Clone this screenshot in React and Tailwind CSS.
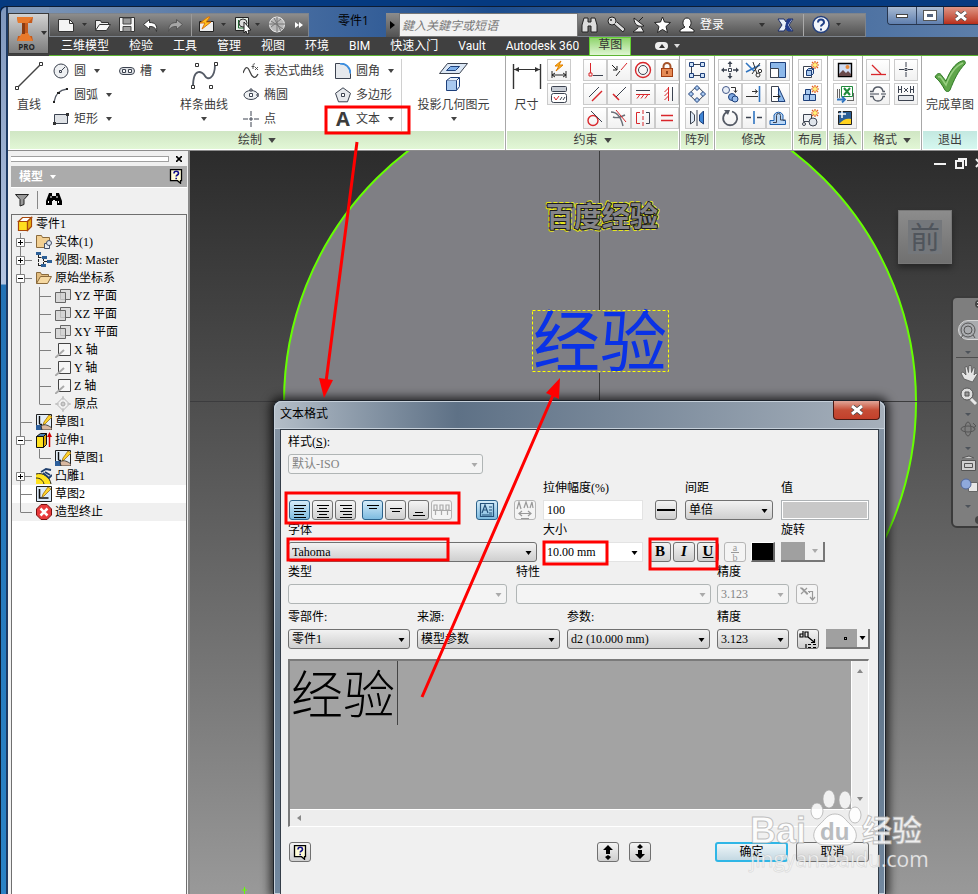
import clsx from 'clsx'

const INK = '#3c4350'
const RED = '#d9262b'
const BLUE = '#2f74c0'

/* Drawings for the 20px ribbon buttons */
const icons = {
  autoDim: (
    <>
      <path d="M12 1 6 6h4l-3 5 7-6h-4z" fill="#ffc21e" stroke="#e07b00" />
      <path d="M3 11v7M17 11v7M3 15h14M6 13l-3 2 3 2M14 13l3 2-3 2" stroke="#222" />
    </>
  ),
  showCons: (
    <>
      <rect x="2.5" y="2.5" width="15" height="5" rx="1" fill="#c9ced6" stroke={INK} />
      <rect x="2.5" y="9.5" width="15" height="9" rx="2" fill="#fff" stroke={INK} />
      <path d="m5 13 2 3 3-4" stroke={RED} />
      <path d="m11 16 2-3M14 16l2-3" stroke={INK} />
    </>
  ),
  coincident: (
    <>
      <path d="M5.5 3v10M4 13h3v3H4z" stroke={RED} />
      <path d="M8 15.5h10" stroke={INK} />
    </>
  ),
  collinear: (
    <>
      <path d="m3 5 5 5M8 6v4H4M7 16l4-5" stroke="#222" />
      <path d="m12 10 6-7" stroke={RED} />
    </>
  ),
  concentric: (
    <>
      <circle cx="10" cy="10" r="7.5" stroke={RED} strokeWidth="1.4" />
      <circle cx="10" cy="10" r="4.5" stroke={INK} />
    </>
  ),
  fix: (
    <>
      <path d="M6.5 9V6.5a3.5 3.5 0 0 1 7 0V9" stroke="#a5542b" strokeWidth="2" />
      <rect x="4.5" y="8.5" width="11" height="8" fill="#e58a54" stroke="#a23d12" />
      <path d="M10 11v3" stroke="#7c2c0a" strokeWidth="1.6" />
    </>
  ),
  parallel: (
    <>
      <path d="M4 13 14 3" stroke={INK} />
      <path d="M7 17 17 7" stroke={RED} strokeWidth="1.4" />
    </>
  ),
  perpendicular: (
    <>
      <path d="m4 10 6 6" stroke={RED} strokeWidth="1.6" />
      <path d="M7 13 17 3" stroke={INK} />
    </>
  ),
  horizontal: (
    <>
      <path d="M3 6.5h14" stroke={INK} />
      <path d="M3 10.5h14M7 10.5l-3 4M11 10.5l-3 4M15 10.5l-3 4" stroke={RED} />
    </>
  ),
  vertical: (
    <>
      <path d="M15.5 3v14" stroke={INK} />
      <path d="M11.5 3v14M11.5 4l-4 4M11.5 8l-4 4M11.5 12l-4 4" stroke={RED} />
    </>
  ),
  tangent: (
    <>
      <circle cx="8" cy="12.5" r="5" stroke={RED} strokeWidth="1.4" />
      <path d="m6 3 11 11" stroke={INK} />
    </>
  ),
  smooth: (
    <>
      <path d="M2 4c6 0 10 5 12 14M4 9c4 2 8 0 12-2" stroke="#6a6f78" strokeWidth="1.4" />
      <path d="m7 2 10 12" stroke={RED} />
    </>
  ),
  symmetric: (
    <>
      <path d="M7 4.500H3.500v11H7M10 2v4M10 8v4M10 14v4" stroke={RED} />
      <path d="M13 4.500h3.500v11H13" stroke={INK} />
    </>
  ),
  equal: <path d="M4 7.500h12M4 12.500h12" stroke={RED} strokeWidth="1.4" />,
  rectPattern: (
    <>
      <path d="M6 4.500h8M4.500 7v7M6 15.500h8" stroke={INK} />
      <path d="M2.500 2.500h4v4h-4zM13.500 2.500h4v4h-4zM2.500 13.500h4v4h-4zM13.500 13.500h4v4h-4z" fill="#cfe2f7" stroke="#1d3f7a" />
    </>
  ),
  circPattern: (
    <>
      <circle cx="10" cy="10" r="6" stroke={INK} />
      <path d="m10 1.500 2.500 2.500-2.500 2.500-2.500-2.500zM10 13.500l2.500 2.500-2.500 2.500-2.500-2.500zM4 7.500l2.500 2.500-2.500 2.500-2.500-2.500zM16 7.500l2.500 2.500-2.500 2.500-2.500-2.500z" fill="#a9c9ef" stroke="#1d3f7a" />
    </>
  ),
  mirror: (
    <>
      <path d="M3.500 3v13l4-3V7z" fill="#dfe9f5" stroke={INK} />
      <path d="M16.500 3v13l-4-3V7z" fill="#3f86d6" stroke="#1d3f7a" />
      <path d="M10 2v16" stroke={INK} />
    </>
  ),
  move: (
    <>
      <path d="M10 3v4M10 13v4M3 10h4M13 10h4" stroke={INK} strokeWidth="1.4" />
      <path d="m10 1 2.500 3h-5zM10 19l2.500-3h-5zM1 10l3-2.500v5zM19 10l-3-2.500v5z" fill={INK} />
      <path d="M8.500 8.500h3v3h-3z" fill="#fff" stroke={INK} />
    </>
  ),
  trim: (
    <>
      <path d="m2 3 8 8M2 12 16 5" stroke={BLUE} strokeWidth="1.6" />
      <path d="m9 2 4 12M16 3 8 14" stroke="#333" />
      <circle cx="14" cy="15" r="2" stroke="#333" />
      <circle cx="16" cy="11" r="1.7" stroke="#333" />
    </>
  ),
  scale: (
    <>
      <path d="M2.500 2.500h15v15h-15z" fill="#8cb8ea" stroke="#1d3f7a" />
      <path d="M2.500 8.500h8v9h-8z" fill="#fff" stroke={INK} />
    </>
  ),
  copy: (
    <>
      <circle cx="6" cy="6" r="3.5" fill="#e8eef6" stroke="#44598a" />
      <circle cx="12" cy="13" r="3.5" fill="#7ea9e2" stroke="#1d3f7a" />
      <circle cx="15" cy="15" r="3" fill="#9cc0ef" stroke="#1d3f7a" />
      <path d="M11 3.500h4.500V8M14 6.500l1.500 2 1.500-2" stroke="#333" />
    </>
  ),
  extend: (
    <>
      <path d="M15.500 2v16" stroke={BLUE} strokeWidth="1.6" />
      <path d="M2 12.500h12M8 7.500h5M11 5.500l2.500 2-2.500 2" stroke="#333" />
    </>
  ),
  stretch: (
    <>
      <path d="M3.500 2.500h7v15h-7z" fill="#fff" stroke={INK} />
      <path d="M10.500 3.500 17 17.500h-6.500z" fill="#8cb8ea" stroke="#1d3f7a" />
      <path d="M5 12.500h7M10 10.500l2 2-2 2" stroke="#222" />
    </>
  ),
  rotate: (
    <>
      <path d="M7 4a7 7 0 1 0 5-.5" stroke="#555b66" strokeWidth="1.8" />
      <path d="m4 2 6 0-2 5z" fill="#555b66" />
    </>
  ),
  split: (
    <>
      <path d="M2 9.500h5M13 9.500h5" stroke={INK} strokeWidth="1.4" />
      <path d="M10 3v13" stroke={BLUE} strokeWidth="1.6" />
    </>
  ),
  offset: (
    <>
      <path d="M2 16.500h15.500v-4H15V7a5 5 0 0 0-9 0v5.500H2z" fill="#b9d6f5" stroke="#1d5fae" />
      <path d="M5 14.500h3.500V7.500a2 2 0 0 1 4 0v4.500h5" stroke={INK} />
    </>
  ),
  part: (
    <>
      <path d="M3.500 6.500h8v11h-8z" fill="#fff" stroke={INK} />
      <path d="M6.500 10.500h5v5h-5zM6.500 10.500l2-2h5l-2 2M13.500 8.500v5l-2 2" fill="#a9c9ef" stroke="#1d3f7a" />
      <path d="M15 1v8M11 5h8M12 2l6 6M18 2l-6 6" stroke="#e2601a" strokeWidth="1.2" />
      <circle cx="15" cy="5" r="2" fill="#fff27a" />
    </>
  ),
  component: (
    <>
      <path d="M3.500 10.500h6v6h-6zM9.500 10.500h6v6h-6zM5.500 5.500h5v5h-5z" fill="#a9c9ef" stroke="#1d3f7a" />
      <path d="M15 1v8M11 5h8M12 2l6 6M18 2l-6 6" stroke="#e2601a" strokeWidth="1.2" />
      <circle cx="15" cy="5" r="2" fill="#fff27a" />
    </>
  ),
  block: (
    <>
      <path d="M3.500 6.500h8v7h-8z" fill="#eceff3" stroke={INK} />
      <circle cx="13" cy="14" r="4" fill="#dfe4ea" stroke={INK} />
      <circle cx="4" cy="16" r="1.5" stroke={INK} />
      <path d="M15 1v8M11 5h8M12 2l6 6M18 2l-6 6" stroke="#e2601a" strokeWidth="1.2" />
      <circle cx="15" cy="5" r="2" fill="#fff27a" />
    </>
  ),
  image: (
    <>
      <path d="M3.500 3.500h13v13h-13z" fill="#cfdcf3" stroke="#000" strokeWidth="1.4" />
      <path d="m4 14 4-4 3 3 2-2 3 3v2H4z" fill="#6a4a4a" />
      <circle cx="12.5" cy="7" r="2" fill="#e98a3a" />
    </>
  ),
  excel: (
    <>
      <path d="M6.500 2.500h11v10h-11z" fill="#fff" stroke="#1f8a3b" />
      <path d="m9 4 6 7M15 4l-6 7" stroke="#1f8a3b" strokeWidth="2" />
      <path d="M2.500 5v9M4.500 5v9M12 16.500h6M18.500 9v8" stroke="#666" />
      <path d="M2 15.500h7M7 12.500l3 3-3 3" stroke={BLUE} strokeWidth="1.8" />
    </>
  ),
  acad: (
    <>
      <path d="M3.500 3.500h13v13h-13z" fill="#2c5f96" stroke="#222" />
      <path d="M4 16c4-5 8-6 12-5v5z" fill="#ffd21f" />
      <path d="M3 6h8M7 2v8" stroke="#fff" strokeWidth="1.5" />
    </>
  ),
  construction: (
    <>
      <path d="m4 5 9 9" stroke={RED} strokeWidth="1.3" />
      <path d="M3 14.500h15" stroke={RED} strokeWidth="1.3" />
    </>
  ),
  centerPoint: (
    <>
      <path d="M10 2v5M10 12v5M3 9.500h5M12 9.500h5" stroke={INK} />
      <path d="M9 8.500h2v2H9z" stroke={INK} />
    </>
  ),
  centerline: (
    <>
      <path d="M2 7.500h3c1-6 9-6 10 0h2M2 12.500h3c1 6 9 6 10 0h2" stroke="#555b66" strokeWidth="1.4" />
      <path d="M2 10h9M13 10h5" stroke={INK} />
    </>
  ),
  driven: (
    <>
      <path d="M2.500 2v7M5.500 2v7M14.500 2v7M17.500 2v7M2.500 5.500h3M14.500 5.500h3M8 4l4 4M12 4 8 8" stroke={INK} />
      <path d="M2.500 11.500h15v5h-15z" fill="#e4e7eb" stroke={INK} />
    </>
  ),
}

const bigIcons = {
  line: (
    <>
      <path d="M3 26 27 2" stroke="#444" strokeWidth="1.4" />
      <path d="M1.500 24.500h3v3h-3zM25.500.5h3v3h-3z" fill="#fff" stroke="#333" />
    </>
  ),
  spline: (
    <>
      <path d="M4 25C4 4 14 10 16 14s10 4 10-12" stroke="#555b66" strokeWidth="1.8" />
      <path d="M2.500 23.500h3v3h-3zM6.500 1.500h3v3h-3zM20.500 23.500h3v3h-3zM25.500.5h3v3h-3z" fill="#fff" stroke="#333" />
    </>
  ),
  project: (
    <>
      <path d="M8.500 1.500h20l-8 10h-20z" fill="#dbe7f5" stroke={INK} />
      <path d="M11.500 4.500h9l-4 4h-9z" fill="#7fb0ea" stroke="#1d3f7a" />
      <path d="M7.500 18.500h10v10h-10z" fill="#a9c9ef" stroke="#1d3f7a" />
      <path d="m7.500 18.500 4-3h9l-3 3M20.500 15.500v9l-3 4" fill="#e8f1fb" stroke="#1d3f7a" />
    </>
  ),
  dimension: (
    <>
      <path d="M1.500 2v25M28.500 2v25" stroke="#333" strokeWidth="1.4" />
      <path d="M2 7.500h26" stroke="#333" />
      <path d="M2 7.500 7 5v5zM28 7.500 23 5v5z" fill="#333" />
    </>
  ),
}

const smallIcons = {
  circle: (
    <>
      <circle cx="8" cy="8" r="7" fill="#eef0f2" stroke={INK} />
      <path d="M6.500 7.500h2v2h-2zM9 7l3-3" stroke={INK} />
    </>
  ),
  arc: (
    <>
      <path d="M1 15C2 8 6 3 14 2" stroke="#555b66" strokeWidth="1.4" />
      <path d="M0 14h2v2H0zM4 5h3v2H4zM13 1h2v2h-2z" fill="#222" />
    </>
  ),
  rect: (
    <>
      <path d="M1.500 3.500h13v9h-13z" fill="#dfe2e6" stroke={INK} />
      <path d="M0 11h3v3H0zM13 2h3v3h-3z" fill="#333" />
    </>
  ),
  slot: (
    <>
      <rect x=".5" y="4.5" width="15" height="7" rx="3.5" fill="#dfe2e6" stroke={INK} />
      <path d="M3.500 6.500h3v3h-3zM9.500 6.500h3v3h-3z" fill="#fff" stroke={INK} />
    </>
  ),
  equation: (
    <>
      <path d="M0 10c3-8 5-6 7-1s5 8 8 2" stroke="#444" strokeWidth="1.3" />
      <path d="M12 1c-2-1-2 1-2 5M8.500 3.500h3M12 4l3 3M15 4l-3 3" stroke="#444" strokeWidth=".9" />
    </>
  ),
  ellipse: (
    <>
      <ellipse cx="8" cy="8" rx="7" ry="4.5" fill="#eef0f2" stroke={INK} />
      <path d="M6.500 6.500h3v3h-3zM14 7h2v2h-2zM7 2h2v2H7z" fill="#fff" stroke={INK} />
    </>
  ),
  point: <path d="M8 0v5M8 11v5M0 8h5M11 8h5M7 7h2v2H7z" stroke={INK} />,
  fillet: (
    <>
      <path d="M.5 15.500V.5H5c6 0 10 4 10.500 10v5z" fill="#e6e9ed" stroke={INK} />
      <path d="M5 .5c6 0 10 4 10.500 10" stroke="#3d8fe0" strokeWidth="2" />
    </>
  ),
  polygon: (
    <>
      <path d="m8 .8 7.500 5.500-3 8.500h-9L.5 6.300z" fill="#e6e9ed" stroke={INK} />
      <path d="M6.500 6.500h3v3h-3z" fill="#fff" stroke={INK} />
    </>
  ),
}

function Caret({ className }) {
  return (
    <svg viewBox="0 0 6 4" className={clsx('h-1 w-1.5 shrink-0', className)} aria-hidden="true">
      <path d="M0 0h6L3 4z" fill="currentColor" />
    </svg>
  )
}

function IconButton({ name }) {
  return (
    <button type="button" aria-label={name} className="flex h-[22px] w-6 items-center justify-center border border-[#cbcbcb] bg-gradient-to-b from-white to-[#f1f1f1]">
      <svg viewBox="0 0 20 20" fill="none" className="size-5">{icons[name]}</svg>
    </button>
  )
}

function SmallTool({ icon, label, menu }) {
  return (
    <button type="button" className="flex h-6 items-center whitespace-nowrap text-left">
      {icon === 'text' ? (
        <b className="mr-[5px] w-4 text-center text-[20px] leading-6 text-[#3c3c3c]">A</b>
      ) : (
        <svg viewBox="0 0 16 16" fill="none" className="mr-[5px] size-4 shrink-0">{smallIcons[icon]}</svg>
      )}
      {label}
      {menu && <Caret className="ml-2 text-[#444]" />}
    </button>
  )
}

function BigTool({ icon, label, menu, className }) {
  return (
    <button type="button" className={clsx('flex h-[72px] flex-col items-center whitespace-nowrap pt-[3px]', className)}>
      <svg viewBox="0 0 30 30" fill="none" className="size-[30px]">{bigIcons[icon]}</svg>
      <span className="mt-[5px] leading-4">{label}</span>
      {menu && <Caret className="mt-1 text-[#444]" />}
    </button>
  )
}

function Panel({ title, menu, className, foot = 'from-[#d0e6c4] to-[#e2f7d6]', children }) {
  return (
    <section className={clsx('flex shrink-0 flex-col border-r border-[#a8a8a8]', className)}>
      <div className="flex h-[75px] justify-center pt-[3px]">{children}</div>
      <h2 className={clsx('mx-px flex h-[18px] items-center justify-center gap-1.5 whitespace-nowrap bg-gradient-to-b', foot)}>
        {title}
        {menu && <Caret className="h-[5px] w-2 text-[#444]" />}
      </h2>
    </section>
  )
}

function IconGrid({ names, className }) {
  return (
    <div className={clsx('grid content-start gap-y-0.5', className)}>
      {names.map((n) => <IconButton key={n} name={n} />)}
    </div>
  )
}

function QuickAccess() {
  return (
    <div className="flex h-6 w-[260px] shrink-0 items-center border border-[#7e848c] bg-gradient-to-b from-[#8d8d8d] to-[#525252] text-[#333]">
      <svg viewBox="0 0 258 22" fill="none" className="h-[22px] w-full">
        <path d="M8.500 5.500h11l4 4v8h-15z" fill="#f4f4f4" stroke="#333" />
        <path d="M19.500 5.500v4h4" stroke="#333" />
        <path d="M32 9h5l-2.500 3zM171 9h5l-2.500 3zM205 9h5l-2.500 3z" fill="#333" />
        <path d="M45.500 16.500v-10h5l1 2h7v3" fill="#eee" stroke="#333" />
        <path d="m45.500 16.500 4-6h11l-4 6z" fill="#f7f7f7" stroke="#333" />
        <path d="M69.500 3.500h15v14h-15z" fill="#f4f4f4" stroke="#333" />
        <path d="M73 4h8v6h-8zM73 12.500h8v5h-8z" fill="#9a9a9a" stroke="#444" />
        <path d="m93.500 10.500 6-5v3c6 0 8 3 7 9-1-4-3-5-7-5v3z" fill="#fff" stroke="#333" />
        <path d="m132.500 10.500-6-5v3c-6 0-8 3-8 9 1-4 4-5 8-5v3z" fill="#a6a6a6" stroke="#555" />
        <path d="M141.500 0v22" stroke="#9a9a9a" />
        <path d="M149.500 7.500h14v10h-14z" fill="#eee" stroke="#222" />
        <path d="m158 3-8 6h5l-3 6 9-7h-5l4-5z" fill="#ffc31e" stroke="#d8700c" />
        <path d="M185.500 3.500h13v13h-13z" fill="#e4eee6" stroke="#222" />
        <path d="M188.500 6v8h7" stroke="#226b32" />
        <circle cx="193" cy="9" r="4" fill="#ddd" stroke="#333" />
        <path d="m194 8 7 8-3 .5 1 3-2 .5-1-3-2 2z" fill="#fff" stroke="#222" />
        <circle cx="227" cy="10.5" r="7.5" fill="#b9b9b9" stroke="#eee" />
        <path d="m221 7 12 8M221 13l10-8M224 4l7 13M227 3v15M219 10h16" stroke="#777" />
        <path d="m245 8 4 3-4 3zM249 8l4 3-4 3z" fill="#fff" />
      </svg>
    </div>
  )
}

function InfoBar() {
  return (
    <div className="flex h-6 w-[288px] shrink-0 items-center border border-l-0 border-[#7e848c] bg-gradient-to-b from-[#8d8d8d] to-[#525252] text-xs text-white">
      <svg viewBox="0 0 118 22" fill="none" className="h-[22px] w-[118px]">
        <path d="M6 4h4v4h3V4h4l2 7v7h-6v-6h-3v6H4v-7z" fill="#ddd" stroke="#222" />
        <circle cx="34" cy="7" r="4" fill="#ddd" stroke="#222" />
        <circle cx="33" cy="6" r="1" fill="#333" />
        <path d="m36 10 9 8 2-3-8-7" fill="#ddd" stroke="#222" />
        <path d="M56 4c0 7 4 9 10 8zM60 14l-5 4h11l-3-5M61 7l4-4" fill="#eee" stroke="#222" />
        <path d="m84.500 3 2 5 6 .5-4.500 4 1.500 6-5-3-5 3 1.500-6-4.500-4 6-.5z" fill="#fff" stroke="#222" />
        <path d="M109 4c5 0 5 8 2 9l5 3v2h-14v-2l5-3c-3-1-3-9 2-9z" fill="#fff" stroke="#222" />
      </svg>
      <button type="button" className="mx-1 whitespace-nowrap">登录</button>
      <span className="flex-1" />
      <Caret className="mr-2.5 text-[#333]" />
      <svg viewBox="0 0 90 22" fill="none" className="h-[22px] w-[90px]">
        <path d="M3 5h6l2 3 2-3h5l-4 6 4 6h-5l-2-3-2 3H3l4-6z" fill="#eaf0fa" stroke="#1d2f6a" />
        <path d="M12 5h5l-4 6 4 6h-5l-2-4 1-4z" fill="#223c8c" />
        <path d="M28.500 0v22" stroke="#aaa" />
        <circle cx="46" cy="10.5" r="8" fill="#f2f5fa" stroke="#24407e" strokeWidth="1.5" />
        <path d="M43 8.500c0-4 6-4 6 0 0 2-3 2-3 4M46 14.500v2" stroke="#1f3f86" strokeWidth="2" />
        <path d="M61 9h5l-2.500 3z" fill="#333" />
      </svg>
    </div>
  )
}

const tabs = ['三维模型', '检验', '工具', '管理', '视图', '环境', 'BIM', '快速入门', 'Vault', 'Autodesk 360']

function Header() {
  return (
    <header className="flex bg-gradient-to-r from-[#8098b8] via-[#1c4d8e] to-[#5d7ea9]">
      <div className="flex w-[41px] shrink-0 flex-col bg-gradient-to-b from-[#8098b8] from-75% to-[#404040] to-75% pt-[6px]">
        <button type="button" className="flex h-[41px] flex-col items-center border border-[#3a3a3a] bg-gradient-to-b from-[#d2d2d2] to-[#7d7d7d] text-[#222]">
          <svg viewBox="0 0 40 28" className="h-7 w-10">
            <path d="M8 3h16l-1 6h-4v13h4l1 5H8l1-5h4V9H9z" fill="#c65a1b" />
            <path d="M8 3h16l-5 6H9zM8 27l5-8h6l5 8z" fill="#e8792a" />
            <path d="M13 9h3v11h-3z" fill="#8a3b10" />
            <path d="M32 17h6l-3 4z" fill="#333" />
          </svg>
          <b className="-ml-1 text-[8px] leading-[10px]">PRO</b>
        </button>
      </div>
      <div className="min-w-0 flex-1">
        <div className="flex h-[30px] items-start">
          <div className="flex min-w-0 flex-1 pt-[6px]">
            <QuickAccess />
            <h1 className="w-[77px] shrink-0 pl-3 text-center text-xs leading-4 text-black">零件1</h1>
            <button type="button" aria-label="展开" className="flex h-6 w-[13px] shrink-0 items-center justify-center bg-gradient-to-b from-[#8d8d8d] to-[#525252]">
              <svg viewBox="0 0 5 8" className="h-2 w-[5px]"><path d="m0 0 5 4-5 4z" /></svg>
            </button>
            <input aria-label="搜索" placeholder="鍵入关鍵字或短语" className="h-6 w-[179px] shrink-0 border border-[#777] bg-[#f2f2f2] px-0.5 text-xs italic placeholder:text-[#777]" />
            <InfoBar />
          </div>
          <div className="flex h-[18px] w-[91px] shrink-0 overflow-hidden rounded-bl border border-t-0 border-r-0 border-[#27364f]">
            <button type="button" aria-label="最小化" className="flex w-[29px] items-center justify-center border-r border-[#33445f] bg-gradient-to-b from-[#a9bbd3] to-[#607fae]">
              <span className="h-1 w-3 border border-[#444] bg-white" />
            </button>
            <button type="button" aria-label="最大化" className="flex w-[27px] items-center justify-center border-r border-[#33445f] bg-gradient-to-b from-[#a9bbd3] to-[#607fae]">
              <span className="h-[9px] w-3 border-[3px] border-white bg-[#55657f] outline outline-[#555]" />
            </button>
            <button type="button" aria-label="关闭" className="flex flex-1 items-center justify-center bg-gradient-to-b from-[#dd9585] to-[#b92c19]">
              <svg viewBox="0 0 12 10" className="h-[10px] w-3"><path d="m1 1 10 8M11 1 1 9" stroke="#444" strokeWidth="4.5" /><path d="m1 1 10 8M11 1 1 9" stroke="#fff" strokeWidth="3" /></svg>
            </button>
          </div>
        </div>
        <nav className="flex h-[19px] items-center border-b border-[#5cb531] bg-[#404040] pl-[2px] text-xs text-white [font-family:Roboto,'Noto_Sans_CJK_SC',sans-serif]">
          {tabs.map((t) => (
            <a key={t} href="#" className="whitespace-nowrap px-[10px] leading-4">{t}</a>
          ))}
          <a href="#" className="flex h-[18px] items-start whitespace-nowrap border border-b-0 border-[#63d132] bg-gradient-to-b from-[#8fd46c] to-[#dff5d2] px-2 leading-[15px] text-[#333]">草图</a>
          <span className="ml-6 flex h-2 w-[13px] items-center justify-center rounded-sm bg-[#eee] text-[#333]"><Caret className="rotate-180" /></span>
          <Caret className="ml-1.5 text-[#ddd]" />
        </nav>
      </div>
    </header>
  )
}

function Ribbon() {
  return (
    <div className="flex h-[95px] overflow-hidden border-b border-[#8c8c8c] bg-white pl-px text-xs text-[#3c3c3c]">
      <Panel title="绘制" menu className="w-[497px]">
        <BigTool icon="line" label="直线" className="w-10" />
        <div className="flex w-[66px] flex-col pl-1">
          <SmallTool icon="circle" label="圆" menu />
          <SmallTool icon="arc" label="圆弧" menu />
          <SmallTool icon="rect" label="矩形" menu />
        </div>
        <div className="w-14 pl-1"><SmallTool icon="slot" label="槽" menu /></div>
        <BigTool icon="spline" label="样条曲线" menu className="w-[66px]" />
        <div className="flex w-[94px] flex-col pl-1.5">
          <SmallTool icon="equation" label="表达式曲线" />
          <SmallTool icon="ellipse" label="椭圆" />
          <SmallTool icon="point" label="点" />
        </div>
        <div className="flex w-[71px] flex-col border-r border-[#d0d0d0] pl-1">
          <SmallTool icon="fillet" label="圆角" menu />
          <SmallTool icon="polygon" label="多边形" />
          <SmallTool icon="text" label="文本" menu />
        </div>
        <BigTool icon="project" label="投影几何图元" menu className="flex-1" />
      </Panel>
      <Panel title="约束" menu className="w-[174px]">
        <BigTool icon="dimension" label="尺寸" className="w-10" />
        <IconGrid names={['autoDim', 'showCons']} />
        <IconGrid
          className="ml-3 grid-cols-4"
          names={['coincident', 'collinear', 'concentric', 'fix', 'parallel', 'perpendicular', 'horizontal', 'vertical', 'tangent', 'smooth', 'symmetric', 'equal']}
        />
      </Panel>
      <Panel title="阵列" className="w-[35px]"><IconGrid names={['rectPattern', 'circPattern', 'mirror']} /></Panel>
      <Panel title="修改" className="w-[78px]">
        <IconGrid className="grid-cols-3" names={['move', 'trim', 'scale', 'copy', 'extend', 'stretch', 'rotate', 'split', 'offset']} />
      </Panel>
      <Panel title="布局" className="w-[35px]"><IconGrid names={['part', 'component', 'block']} /></Panel>
      <Panel title="插入" className="w-[35px]"><IconGrid names={['image', 'excel', 'acad']} /></Panel>
      <Panel title="格式" menu className="w-[59px]">
        <IconGrid className="grid-cols-2 gap-x-1" names={['construction', 'centerPoint', 'centerline', 'driven']} />
      </Panel>
      <Panel title="退出" className="min-w-[57px] flex-1" foot="from-[#c3e8e0] to-[#d6f8f0]">
        <button type="button" className="flex flex-col items-center whitespace-nowrap">
          <svg viewBox="0 0 34 34" className="h-[34px] w-[34px]">
            <path d="M2 18c2-4 5-5 7-1l4 5C17 12 22 4 29 2c3-1 4 1 3 3-7 7-11 16-15 26-1 2-4 2-5 0-3-5-5-9-10-13z" fill="#5fa54a" stroke="#2e7a24" />
            <path d="M5 18c2-1 3 0 4 2l4 6C17 15 22 7 30 4" fill="none" stroke="#98cf82" strokeWidth="1.5" />
          </svg>
          <span className="mt-1 leading-4">完成草图</span>
        </button>
      </Panel>
    </div>
  )
}

/* Model browser */
const treeIcons = {
  part: (
    <>
      <path d="M1.500 5.500h9v9h-9z" fill="#ffdf1f" stroke="#a8480c" strokeWidth="1.2" />
      <path d="m1.500 5.500 4-4h9l-4 4z" fill="#fff" stroke="#a8480c" strokeWidth="1.2" />
      <path d="m10.500 5.500 4-4v9l-4 4z" fill="#e8b010" stroke="#a8480c" strokeWidth="1.2" />
    </>
  ),
  solids: (
    <>
      <path d="M.5 13.500v-12h5l1 2h7v10z" fill="#f2cf92" stroke="#8a6a3c" />
      <path d="M8.500 9.500h5v5h-5z" fill="#e8ecf2" stroke="#44506a" />
      <circle cx="13" cy="9" r="2.5" fill="#dfe6f0" stroke="#44506a" />
    </>
  ),
  view: (
    <>
      <path d="M2.500 3v11M2.500 5.500h4M7.500 6v8M8 9.500h3M2.500 13.500h3" stroke="#222" strokeDasharray="3 1" />
      <path d="M0 0h5v3H0zM6 4h5v3H6zM11 8h5v3h-5zM5 12h5v3H5z" fill="#2c5f96" />
    </>
  ),
  folder: (
    <>
      <path d="M.5 13.500v-11h4l1 2h7v2" fill="#e2bd80" stroke="#8a6a3c" />
      <path d="m.5 13.500 4-7h11l-4 7z" fill="#f6d9a2" stroke="#8a6a3c" />
    </>
  ),
  plane: (
    <>
      <path d="M5.500 1.500h10v10h-10z" fill="#ddd" stroke="#666" />
      <path d="M.5 4.500h10v10H.5z" fill="#d2d2d2" fillOpacity=".8" stroke="#666" />
    </>
  ),
  axis: (
    <>
      <path d="M3.500 1.500h12v12h-12z" fill="#f6f6f6" stroke="#444" />
      <path d="m0 16 9-8" stroke="#aaa" strokeWidth="2" />
    </>
  ),
  origin: (
    <>
      <path d="M8 1.500 14.500 8 8 14.500 1.500 8zM8 0v4M8 12v4M0 8h4M12 8h4" stroke="#b5b5b5" />
      <circle cx="8" cy="8" r="2" fill="#ccc" stroke="#aaa" />
    </>
  ),
  sketchUsed: (
    <>
      <path d="M.5.500h15v15H.5z" fill="#e4eef8" stroke="#222" />
      <path d="M3.500 2v8M3.500 10.500H6" stroke="#111" strokeWidth="1.4" />
      <path d="m13 1 3 2-7 7-2 1 1-3z" fill="#ffd42a" stroke="#a07010" strokeWidth=".8" />
      <path d="M0 11h6v5H0z" fill="#2d5f9c" />
      <path d="M5 12c4-3 8 0 11 2v2H6z" fill="#d9b8a0" stroke="#222" strokeWidth=".8" />
    </>
  ),
  extrude: (
    <>
      <path d="M.5 4.500h7v11h-7z" fill="#ffe21f" stroke="#111" />
      <path d="m7.500 4.500 3-3v11l-3 3z" fill="#d8a80c" stroke="#111" />
      <path d="m.5 4.500 4-3h6l-3 3z" fill="#4a7fb5" stroke="#111" />
      <path d="M13.500 15V4" stroke="#d40000" strokeWidth="1.5" />
      <path d="m11 5 2.500-5L16 5z" fill="#d40000" />
    </>
  ),
  emboss: (
    <>
      <path d="M0 6c7-2 14 3 15 10H0z" fill="#ffe21f" />
      <path d="M0 6c7-2 14 3 15 10M0 10c4 0 7 2 8 6" stroke="#222" />
      <path d="m5 4 5-3 5 1M7 5l6 5 3-3M9 4l5 3" stroke="#1f3f6d" strokeWidth="1.8" />
    </>
  ),
  sketch: (
    <>
      <path d="M.5.500h15v15H.5z" fill="#dcebfa" stroke="#222" />
      <path d="M3.500 3v9h9" stroke="#111" strokeWidth="1.6" />
      <path d="m12 1 3 2-7 7-2 1 1-3z" fill="#ffd42a" stroke="#a07010" strokeWidth=".8" />
    </>
  ),
  end: (
    <>
      <path d="M5 .5h6l4.500 4.500v6L11 15.500H5L.5 11V5z" fill="#e8393b" stroke="#7a1010" />
      <path d="m4.500 4.500 7 7M11.500 4.500l-7 7" stroke="#fff" strokeWidth="2.5" />
    </>
  ),
}

const tree = [
  { guides: [], icon: 'part', label: '零件1' },
  { guides: ['plus'], icon: 'solids', label: '实体(1)' },
  { guides: ['plus'], icon: 'view', label: '视图: Master' },
  { guides: ['minus'], icon: 'folder', label: '原始坐标系' },
  { guides: ['line', 'tee'], icon: 'plane', label: 'YZ 平面' },
  { guides: ['line', 'tee'], icon: 'plane', label: 'XZ 平面' },
  { guides: ['line', 'tee'], icon: 'plane', label: 'XY 平面' },
  { guides: ['line', 'tee'], icon: 'axis', label: 'X 轴' },
  { guides: ['line', 'tee'], icon: 'axis', label: 'Y 轴' },
  { guides: ['line', 'tee'], icon: 'axis', label: 'Z 轴' },
  { guides: ['line', 'end'], icon: 'origin', label: '原点' },
  { guides: ['tee'], icon: 'sketchUsed', label: '草图1' },
  { guides: ['minus'], icon: 'extrude', label: '拉伸1' },
  { guides: ['line', 'end'], icon: 'sketchUsed', label: '草图1' },
  { guides: ['plus'], icon: 'emboss', label: '凸雕1' },
  { guides: ['tee'], icon: 'sketch', label: '草图2', active: true },
  { guides: ['end'], icon: 'end', label: '造型终止' },
]

function Guide({ type }) {
  const box = type === 'plus' || type === 'minus'
  return (
    <svg viewBox="0 0 19 18" fill="none" className="h-[18px] w-[19px] shrink-0 overflow-visible" stroke="#808080">
      <path d={type === 'end' ? 'M3.500 0v9' : 'M3.500 0v18'} />
      {type !== 'line' && <path d="M3.500 9.500H15" />}
      {box && <path d="M-.5 5.500h8v8h-8z" fill="#fff" />}
      {box && <path d="M1 9.500h5" stroke="#000" />}
      {type === 'plus' && <path d="M3.500 7v5" stroke="#000" />}
    </svg>
  )
}

function ModelBrowser() {
  return (
    <aside className="flex w-[182px] shrink-0 flex-col border-r-2 border-[#8a8a8a] bg-[#f0f0f0] pl-[3px] pr-[1px] text-black [font-family:'Liberation_Serif','Noto_Sans_CJK_SC',serif]">
      <div className="flex h-[15px] items-center gap-1 pr-0.5">
        <span className="h-1.5 flex-1 border-y border-r border-[#a0a0a0] bg-white" />
        <button type="button" aria-label="关闭面板" className="flex w-3 justify-center">
          <svg viewBox="0 0 6 6" className="size-1.5"><path d="m0 0 6 6M6 0 0 6" stroke="#000" strokeWidth="1.6" /></svg>
        </button>
      </div>
      <div className="flex h-[21px] items-center bg-[#ababab] pl-2 pr-1 text-xs text-white">
        <b>模型</b>
        <Caret className="ml-1.5 h-1 w-2" />
        <button type="button" aria-label="帮助" className="ml-auto"><HelpIcon /></button>
      </div>
      <div className="flex h-[27px] items-start gap-2 border-t border-white pl-1 pt-[3px]">
        <button type="button" aria-label="过滤器">
          <svg viewBox="0 0 14 16" className="h-4 w-3.5"><path d="M.5 3.500h13L9 8.500v5l-4 1.500V8.500z" fill="#999" stroke="#222" /></svg>
        </button>
        <span className="h-[18px] w-px bg-[#888]" />
        <button type="button" aria-label="查找">
          <svg viewBox="0 0 16 16" className="size-4"><path d="M3 2h3v3h4V2h3l3 8v4h-5v-4H9v-1H7v1H6v4H0v-4z" /><path d="M2.500 10v2M12.500 10v2M5 5v2M11 5v2" stroke="#fff" /></svg>
        </button>
      </div>
      <ul className="flex-1 overflow-hidden border border-b-0 border-[#6f6f6f] bg-white text-xs">
        {tree.map((row, i) => (
          <li key={i} className={clsx('flex h-[18px] items-center pl-[5px]', row.active ? 'bg-white' : 'bg-[#f0f0f0]')}>
            {row.guides.map((g, n) => <Guide key={n} type={g} />)}
            <svg viewBox="0 0 16 16" fill="none" className="mr-[3px] size-4 shrink-0">{treeIcons[row.icon]}</svg>
            <span className="whitespace-nowrap leading-[18px]">{row.label}</span>
          </li>
        ))}
      </ul>
    </aside>
  )
}

function HelpIcon() {
  return (
    <svg viewBox="0 0 14 15" fill="none" className="h-[15px] w-3.5">
      <path d="M1.500.7h11v11h-1v2.500l-3-2.500h-7z" fill="#fffdd8" stroke="#000" strokeWidth="1.3" />
      <path d="M5 4.500c0-3 4.500-3 4.500 0 0 1.500-2.300 1.500-2.300 3M7.200 8.700v1.600" stroke="#10108a" strokeWidth="1.6" />
    </svg>
  )
}

/* Text format dialog */
const btn = 'flex h-5 shrink-0 items-center justify-center rounded-[3px] border'
const btnPlain = 'border-[#707070] bg-gradient-to-b from-[#f4f4f4] to-[#cfcfcf]'
const btnOn = 'border-[#2c628b] bg-gradient-to-b from-[#d5ecf9] to-[#7dbbe0]'
const btnOff = 'border-[#b5b5b5] bg-[#f4f4f4] text-[#999]'

function Tool({ label, state = btnPlain, className = 'w-[22px]', children }) {
  return (
    <button type="button" aria-label={label} className={clsx(btn, state, className)}>
      {children}
    </button>
  )
}

function Lines({ d, stroke = '#000' }) {
  return <svg viewBox="0 0 18 18" fill="none" className="size-[18px] shrink-0"><path d={d} stroke={stroke} strokeWidth="1.2" /></svg>
}

function Field({ label, className, children }) {
  return (
    <label className={clsx('flex shrink-0 flex-col gap-1', className)}>
      <span className="whitespace-nowrap leading-4">{label}</span>
      {children}
    </label>
  )
}

function Select({ value, disabled, flat }) {
  return (
    <span className="relative flex">
      <select
        disabled={disabled}
        className={clsx(
          'h-5 w-full appearance-none border px-[3px] leading-4',
          flat && 'border-[#e3e3e3] bg-white',
          disabled && 'rounded-[3px] border-[#b0b5b5] bg-[#f4f4f4] text-[#838383] opacity-100',
          !flat && !disabled && 'rounded-[3px] border-[#707070] bg-gradient-to-b from-[#f2f2f2] to-[#cfcfcf]',
        )}
      >
        <option>{value}</option>
      </select>
      <Caret className={clsx('pointer-events-none absolute right-[5px] top-[9px] w-[7px]', disabled ? 'text-[#aaa]' : 'text-black')} />
    </span>
  )
}

function TextDialog() {
  return (
    <div
      role="dialog"
      aria-label="文本格式"
      className="absolute bottom-0 left-[83px] top-[249px] flex w-[613px] flex-col rounded-t-lg border border-b-0 border-[#1c222a] bg-gradient-to-b from-[#8997a6] via-[#5f7387] to-[#72889f] px-1.5 shadow-[0_0_10px_3px_rgba(0,0,0,0.7)] ring-1 ring-inset ring-[#c6d0da]"
    >
      <div className="-mx-1.5 flex h-[28px] items-start rounded-t-lg bg-gradient-to-r from-[#b4bec8] via-[#5e7186] via-30% to-[#a6b0bb] pl-1.5 pr-[5px] ring-1 ring-inset ring-[#c6d0da]">
        <h2 className="flex-1 text-xs leading-[26px] text-black">文本格式</h2>
        <button type="button" aria-label="关闭" className="flex h-[19px] w-[47px] items-center justify-center rounded-b border border-t-0 border-[#4c1a14] bg-gradient-to-b from-[#e0a598] via-[#c64d36] to-[#c2402b]">
          <svg viewBox="0 0 12 10" className="h-[10px] w-3"><path d="m1 1 10 8M11 1 1 9" stroke="#444" strokeWidth="4.5" /><path d="m1 1 10 8M11 1 1 9" stroke="#fff" strokeWidth="3" /></svg>
        </button>
      </div>
      <div className="flex flex-1 flex-col border border-b-0 border-[#343d48] bg-[#f0f0f0] px-[7px] pt-1 text-xs text-black [font-family:'Liberation_Serif','Noto_Sans_CJK_SC',serif]">
        <Field label={<>样式(<u>S</u>):</>} className="w-[195px]">
          <Select value="默认-ISO" disabled />
        </Field>

        <div className="mt-1.5 flex items-end">
          <div className="ml-px flex gap-0.5">
            <Tool label="左对齐" state={btnOn} className="w-[21px]"><Lines d="M3 4.500h12M3 7.500h10M3 10.500h12M3 13.500h10M3 16.500h12" /></Tool>
            <Tool label="居中" className="w-[21px]"><Lines d="M3 4.500h12M5 7.500h8M3 10.500h12M5 13.500h8M3 16.500h12" /></Tool>
            <Tool label="右对齐" className="w-[21px]"><Lines d="M3 4.500h12M6 7.500h9M3 10.500h12M6 13.500h9M3 16.500h12" /></Tool>
            <Tool label="顶部" state={btnOn} className="ml-1 w-[21px]"><Lines d="M3 4.500h12M5 7.500h8" /></Tool>
            <Tool label="中间" className="w-[21px]"><Lines d="M3 7.500h12M5 10.500h8" /></Tool>
            <Tool label="底部" className="w-[21px]"><Lines d="M5 11.500h8M3 14.500h12" /></Tool>
            <Tool label="基线" state={btnOff} className="w-[21px]"><Lines stroke="#aaa" d="M0 9.500h18M1 4h3v5H1zM7 4h3v5H7zM13 4h3v5h-3zM2.500 9v5M8.500 9v5M14.500 9v5" /></Tool>
          </div>
          <Tool label="文本框" state={btnOn} className="ml-6 w-[22px]"><Lines stroke="#24527a" d="M2.500 2.500h13v13h-13zM4 12l3-8 3 8M5 9h4M11 6h3M11 9h3M11 12h3M4 14h10" /></Tool>
          <Tool label="拉伸" state={btnOff} className="ml-4 w-[22px]"><Lines stroke="#999" d="m1 8 2-7 2 7M8 7l2-6 2 6M14 7l2-6 1 6M3 12.500h12M6 10l-3 2.500L6 15M12 10l3 2.500-3 2.500M5 17.500h8" /></Tool>
          <Field label="拉伸幅度(%)" className="ml-[7px] w-[100px]">
            <input defaultValue="100" className="h-5 w-full border border-[#e3e3e3] bg-white px-[3px]" />
          </Field>
          <Tool label="线" className="ml-3 w-[22px]"><span className="h-0.5 w-[18px] bg-black" /></Tool>
          <Field label="间距" className="ml-2 w-[88px]"><Select value="单倍" /></Field>
          <Field label="值" className="ml-2 w-[88px]">
            <input disabled className="h-5 w-full border border-[#adb2b5] bg-[#c8c8c8] outline outline-offset-[-2px] outline-white" />
          </Field>
        </div>

        <div className="mt-0.5 flex items-end">
          <Field label="字体" className="w-[249px]"><Select value="Tahoma" /></Field>
          <Field label="大小" className="ml-1.5 w-[100px]"><Select value="10.00 mm" flat /></Field>
          <div className="ml-1.5 flex gap-0.5 text-[15px] font-bold">
            <Tool label="粗体" className="w-[22px]">B</Tool>
            <Tool label="斜体" className="w-[22px]"><i>I</i></Tool>
            <Tool label="下划线" className="w-[22px]"><u>U</u></Tool>
          </div>
          <Tool label="堆叠" state={btnOff} className="ml-[5px] w-[22px]">
            <span className="flex flex-col items-center text-[10px] leading-[9px]"><span className="border-b border-[#999] px-0.5">a</span>b</span>
          </Tool>
          <button type="button" aria-label="颜色" className="ml-[5px] h-5 w-6 border border-b-2 border-r-2 border-white border-b-[#666] border-r-[#666] bg-black" />
          <Field label="旋转" className="ml-1.5 w-11">
            <button type="button" disabled className="flex h-5 items-center justify-end border-b-2 border-r-2 border-[#777] bg-[linear-gradient(to_right,#a0a0a0_24px,#f0f0f0_24px)] pr-1 text-[#aaa]"><Caret className="w-2" /></button>
          </Field>
        </div>

        <div className="mt-0.5 flex items-end">
          <Field label="类型" className="w-[219px]"><Select value="" disabled /></Field>
          <Field label="特性" className="ml-[9px] w-[195px]"><Select value="" disabled /></Field>
          <Field label="精度" className="ml-1.5 w-[72px]"><Select value="3.123" disabled /></Field>
          <Tool label="添加特性" state={btnOff} className="ml-[7px] w-[22px]"><Lines stroke="#999" d="m3 3 6 6M9 3 3 9M2 3h2M8 9h2M4 3l6 6M10 6.500h4.500V15M12 12l2.500 3 2.500-3M11.500 6v2" /></Tool>
        </div>

        <div className="mt-[5px] flex items-end">
          <Field label="零部件:" className="w-[122px]"><Select value="零件1" /></Field>
          <Field label="来源:" className="ml-[7px] w-[143px]"><Select value="模型参数" /></Field>
          <Field label="参数:" className="ml-[7px] w-[143px]"><Select value="d2 (10.000 mm)" /></Field>
          <Field label="精度" className="ml-[7px] w-[72px]"><Select value="3.123" /></Field>
          <Tool label="添加参数" className="ml-2 w-[22px]">
            <Lines d="M4 1v6H1V4h3M6 2h3v5H6zM9 7l6 5M12 12.500h3.500V9M7 14v4M9 14.500h3M9 17.500h3M14 14.500h3M14 17.500h3" />
          </Tool>
          <button type="button" aria-label="符号" className="ml-[7px] flex h-5 w-11 shrink-0 items-center justify-end border-b-2 border-r-2 border-[#777] bg-[linear-gradient(to_right,#a0a0a0_31px,#f0f0f0_31px)] pr-0.5">
            <span className="mr-3 size-[3px] border border-black" />
            <Caret className="w-[7px]" />
          </button>
        </div>

        <div className="relative mr-0.5 mt-[10px] grid h-[168px] grid-cols-[1fr_17px] grid-rows-[1fr_17px] border-2 border-b border-r border-[#7a7a7a] border-b-white border-r-white bg-[#ededed]">
          <textarea
            aria-label="文本"
            defaultValue="经验"
            className="resize-none overflow-hidden bg-[#a3a3a3] pl-px text-[52px] font-light leading-[72px] outline-none"
          />
          <span className="pointer-events-none absolute left-[107px] top-0 h-16 w-px bg-[#444]" />
          <div className="flex flex-col items-center justify-between border-l border-white py-2 text-[#888]">
            <Caret className="rotate-180" />
            <Caret />
          </div>
          <div className="flex items-center border-t border-white pl-1.5 text-[#888]"><Caret className="rotate-90" /></div>
        </div>

        <div className="mt-[15px] flex items-center">
          <Tool label="帮助" className="ml-px w-[22px]"><HelpIcon /></Tool>
          <div className="ml-auto flex gap-[10px]">
            <Tool label="上一个" className="w-[22px]"><svg viewBox="0 0 10 16" className="h-4 w-[10px]"><path d="m5 1 5 5H7v4H3V6H0zM5 11l3 2-3 3-3-3z" /></svg></Tool>
            <Tool label="下一个" className="w-[22px]"><svg viewBox="0 0 10 16" className="h-4 w-[10px] rotate-180"><path d="m5 1 5 5H7v4H3V6H0zM5 11l3 2-3 3-3-3z" /></svg></Tool>
          </div>
          <button type="button" className={clsx(btn, 'ml-16 w-[73px] border-2 border-[#2fb6e6] bg-gradient-to-b from-[#eef5f8] to-[#c4d9e3]')}>确定</button>
          <button type="button" className={clsx(btn, btnPlain, 'ml-2 mr-0.5 w-[73px]')}>取消</button>
        </div>
      </div>
    </div>
  )
}

function NavBar() {
  return (
    <div className="absolute -right-[18px] top-[145px] h-[232px] w-[45px] rounded-md border-2 border-[#3b3b3b] bg-[#7e7e7e]">
      <svg viewBox="0 0 40 228" fill="none" className="h-[228px] w-10">
        <circle cx="26" cy="6" r="4" fill="#444" />
        <path d="m24 4 4 4M28 4l-4 4" stroke="#ccc" />
        <rect x="5.5" y="22.5" width="30" height="19" rx="9.5" fill="#a9abae" stroke="#d5d5d5" />
        <circle cx="15" cy="32" r="7" stroke="#555" />
        <circle cx="15" cy="32" r="4" stroke="#555" />
        <path d="m10 37-2 3M20 37l2 3" stroke="#555" />
        <path d="M12 53h6l-3 3zM12 115h6l-3 3zM12 149h6l-3 3zM12 207h6l-3 3z" fill="#4d535a" />
        <path d="M3 59.500h30" stroke="#4e4e4e" />
        <path d="M11 81 8 75l2-1 3 3-1-8 2-.5 1.500 6 .5-7h2l.5 7 2-5 1.500.5-1 7 2-2 1.500 1-5 8z" fill="#e4e4e4" stroke="#555" strokeWidth=".8" />
        <circle cx="14" cy="96" r="6" fill="#ddd" stroke="#555" />
        <path d="M12 94h4v4h-4z" fill="#999" stroke="#555" />
        <path d="m18 101 5 5" stroke="#e8e8e8" strokeWidth="3" />
        <ellipse cx="15" cy="131" rx="3" ry="7" stroke="#555" />
        <ellipse cx="15" cy="131" rx="7" ry="3" stroke="#555" />
        <path d="m20 125 3 3-3 2" stroke="#555" />
        <path d="M8.500 162.500h14v10h-14zM11.500 165.500h8v4h-8zM9 160l7-2 5 2" fill="#d0d0d0" stroke="#555" />
        <path d="M15.500 184.500h9v9h-9z" fill="#e6e6e6" stroke="#666" />
        <circle cx="13" cy="186" r="5" fill="#8fa9dc" stroke="#51669a" />
        <circle cx="26" cy="222" r="4" fill="#444" />
      </svg>
    </div>
  )
}

function Viewport() {
  return (
    <main className="relative min-w-0 flex-1 overflow-hidden bg-gradient-to-b from-[#2c2c2c] to-[#999]">
      <svg className="absolute inset-0 h-full w-full" fill="none">
        <circle cx="410" cy="251" r="316" fill="#7f7f84" stroke="#66ff00" strokeWidth="2" />
        <path d="M0 250.500h2000M409.500 0v160M409.500 222v40" stroke="#3c3c3e" />
        <g fontFamily="'Noto Sans CJK SC', sans-serif" strokeLinejoin="round">
          <text x="356" y="76" fontSize="28" fontWeight="bold">
            <tspan stroke="#e8e81a" strokeWidth="4" strokeDasharray="4 2" paintOrder="stroke" fill="#222">百度经验</tspan>
          </text>
          <text x="356" y="76" fontSize="28" fontWeight="bold" stroke="#1c1c1c" strokeWidth="2" paintOrder="stroke" fill="#85858a" aria-hidden="true">百度经验</text>
          <text x="343" y="215" fontSize="67" fill="#0a32e6">经验</text>
        </g>
        <path d="M342.500 159.500h136v61h-136z" stroke="#ffff00" strokeDasharray="3 2" />
        <path d="M52 739h5M54.500 736v8" stroke="#66ff00" />
      </svg>
      <div className="absolute right-[26px] top-[59px] flex h-[54px] w-[54px] items-center justify-center border border-[#777] bg-gradient-to-b from-[#8c8c8c] to-[#707070] shadow-[0_4px_6px_rgba(0,0,0,0.35)]">
        <span className="bg-[#74777b] px-0.5 text-[30px] leading-[34px] text-[#50555c]">前</span>
      </div>
      <svg viewBox="0 0 46 12" fill="none" className="absolute -right-0.5 top-[6px] h-3 w-[46px]" stroke="#f2f2f2" strokeWidth="2">
        <path d="M0 7h12M24 2h8v7M22 4h7v7h-7zM42 2l7 8M49 2l-7 8" />
      </svg>
      <NavBar />
      <TextDialog />
    </main>
  )
}

/* Red call-outs and the site mark over the whole window */
function Annotations() {
  return (
    <svg className="pointer-events-none absolute inset-0 h-full w-full" fill="none">
      <g stroke="#ff0000" strokeWidth="3">
        <path d="M326 107h83v26h-83zM286 493h173v30H286zM288 539h160v21H288zM544 542h63v22h-63zM650 539h67v30h-67z" />
        <path d="m357 142-31 240M422 697l132-304" />
      </g>
      <path d="m324 398-5-20 14 2zM560 378l-1 21-13-6z" fill="#ff0000" />
      <g fill="#fff" fillOpacity=".85" stroke="#a8a8a8" strokeOpacity=".7">
        <ellipse cx="817" cy="811" rx="6" ry="8" />
        <ellipse cx="829" cy="799" rx="6" ry="9" />
        <ellipse cx="845" cy="800" rx="6" ry="9" />
        <ellipse cx="855" cy="815" rx="6" ry="8" />
        <path d="M835 814c8 0 10 6 16 11 9 8 6 20-5 20H825c-12 0-15-12-6-20 6-5 8-11 16-11z" />
        <text x="750" y="843" fontSize="36" fontWeight="bold" fontFamily="'Liberation Sans', sans-serif">Bai</text>
        <text x="862" y="841" fontSize="30" fontWeight="bold" fontFamily="'Noto Sans CJK SC', sans-serif">经验</text>
        <text x="750" y="867" fontSize="21" strokeOpacity=".3" fontFamily="'Open Sans', sans-serif">jingyan.baidu.com</text>
      </g>
      <text x="820" y="840" fontSize="24" fontWeight="bold" fill="#b9bcbf" fontFamily="'Liberation Sans', sans-serif">du</text>
    </svg>
  )
}

export default function App() {
  return (
    <div className="relative flex h-screen flex-col overflow-hidden bg-[#053a80] pt-[6px] [font-family:'Open_Sans','Noto_Sans_CJK_SC',sans-serif]">
      <div className="flex min-h-0 flex-1 rounded-tl-md border-l border-t border-[#0d1c33]">
        <div className="w-[7px] shrink-0 rounded-tl-md border-r-2 border-[#1e3a63] bg-[linear-gradient(#7f97bd,#b5c6e2_277px,#2372b5_278px,#2b83c6)]" />
        <div className="flex min-w-0 flex-1 flex-col">
          <Header />
          <Ribbon />
          <div className="flex min-h-0 flex-1">
            <ModelBrowser />
            <Viewport />
          </div>
        </div>
      </div>
      <Annotations />
    </div>
  )
}
